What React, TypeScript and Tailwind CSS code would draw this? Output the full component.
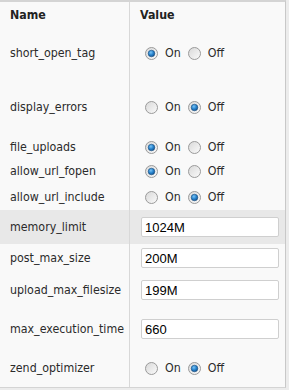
import React from "react";

type Row =
  | { name: string; kind: "radio"; on: boolean; h: string }
  | { name: string; kind: "text"; value: string; h: string; hl?: boolean };

const rows: Row[] = [
  { name: "short_open_tag", kind: "radio", on: true, h: "h-[50px]" },
  { name: "display_errors", kind: "radio", on: false, h: "h-[58px]" },
  { name: "file_uploads", kind: "radio", on: true, h: "h-[22px]" },
  { name: "allow_url_fopen", kind: "radio", on: true, h: "h-[26px]" },
  { name: "allow_url_include", kind: "radio", on: false, h: "h-[26px]" },
  { name: "memory_limit", kind: "text", value: "1024M", h: "h-[34px]", hl: true },
  { name: "post_max_size", kind: "text", value: "200M", h: "h-[28px]" },
  { name: "upload_max_filesize", kind: "text", value: "199M", h: "h-[36px]" },
  { name: "max_execution_time", kind: "text", value: "660", h: "h-[42px]" },
  { name: "zend_optimizer", kind: "radio", on: false, h: "h-[37px]" },
];

function Radio({ checked }: { checked: boolean }) {
  return (
    <svg width="13" height="13" viewBox="0 0 13 13" className="shrink-0">
      <defs>
        <linearGradient id="rg" x1="0" y1="0" x2="1" y2="1">
          <stop offset="0" stopColor="#d8d8d8" />
          <stop offset="1" stopColor="#fbfbfb" />
        </linearGradient>
        <radialGradient id="dot" cx="0.4" cy="0.35" r="0.7">
          <stop offset="0" stopColor="#7cc4f4" />
          <stop offset="0.5" stopColor="#2a86d0" />
          <stop offset="1" stopColor="#0f4f8c" />
        </radialGradient>
      </defs>
      <circle cx="6.5" cy="6.5" r="6" fill="url(#rg)" stroke="#9a9a9a" strokeWidth="1" />
      {checked ? <circle cx="6.5" cy="6.5" r="3.3" fill="url(#dot)" stroke="#1c4f7e" strokeWidth="0.6" /> : null}
    </svg>
  );
}

export default function App() {
  return (
    <div className="h-[390px] w-[289px] bg-[#ececec] text-[12.3px] text-[#2b2b2b] [font-family:'DejaVu_Sans_Condensed','DejaVu_Sans',sans-serif]">
      <div className="flex h-[388px] w-[286px] flex-col border-t-2 border-r border-b border-[#d4d4d4] border-r-[#c8c8c8] bg-[#f9f9f9]">
        <div className="flex h-[26px] shrink-0 items-center font-bold text-[#222]">
          <div className="w-[130px] border-r border-[#d8d8d8] pl-[10px] leading-[26px]">Name</div>
          <div className="pl-[10px]">Value</div>
        </div>
        {rows.map((row) => (
          <div key={row.name} className={`flex shrink-0 ${row.h} ${row.kind === "text" && row.hl ? "bg-[#e8e8e8]" : ""}`}>
            <div className="flex w-[130px] items-center border-r border-[#d8d8d8] pl-[10px]">{row.name}</div>
            <div className="flex flex-1 items-center">
              {row.kind === "radio" ? (
                <div className="flex items-center pl-[15px]">
                  <Radio checked={row.on} />
                  <span className="ml-[7px] mr-[7px]">On</span>
                  <Radio checked={!row.on} />
                  <span className="ml-[7px]">Off</span>
                </div>
              ) : (
                <input
                  readOnly
                  value={row.value}
                  className="ml-[11px] h-[20px] w-[138px] rounded-[2px] border border-[#cfcfcf] bg-white px-[3px] text-[13px] text-black outline-none [font-family:'Liberation_Sans',sans-serif]"
                />
              )}
            </div>
          </div>
        ))}
        <div className="flex flex-1">
          <div className="w-[130px] border-r border-[#d8d8d8]" />
        </div>
      </div>
    </div>
  );
}
